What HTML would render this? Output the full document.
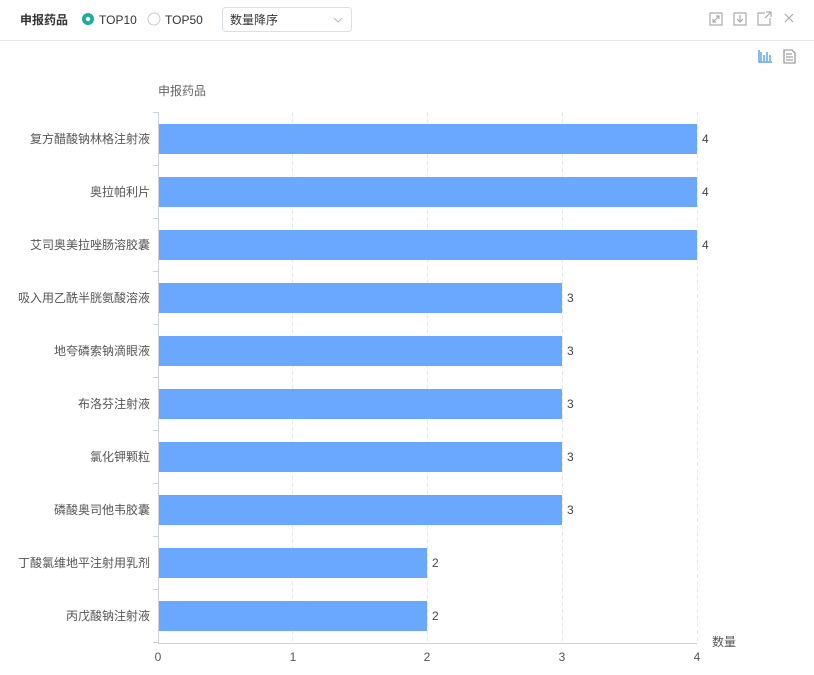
<html><head><style>body{margin:0;width:814px;height:675px;background:#fff;font-family:"Liberation Sans","Noto Sans CJK SC",sans-serif;overflow:hidden}</style></head><body>
<svg width="814" height="675" xmlns="http://www.w3.org/2000/svg" font-family="Liberation Sans, Noto Sans CJK SC, sans-serif">
<text x="20" y="24" font-size="12" font-weight="bold" fill="#333">申报药品</text>
<circle cx="88" cy="19" r="6" fill="#1aad9a"/><circle cx="88" cy="19" r="2.2" fill="#fff"/>
<text x="99" y="24" font-size="12" fill="#333">TOP10</text>
<circle cx="154" cy="19" r="6" fill="#fff" stroke="#ccc"/>
<text x="165" y="24" font-size="12" fill="#333">TOP50</text>
<rect x="222.5" y="7.5" width="129" height="24" rx="3" fill="#fff" stroke="#dcdfe6"/>
<text x="230" y="24" font-size="12" fill="#333">数量降序</text>
<path d="M334 18l4 4 4-4" fill="none" stroke="#bbb"/>
<line x1="0" y1="40.5" x2="814" y2="40.5" stroke="#e8e8e8"/>
<g fill="none" stroke="#aaa" stroke-width="1.2">
<rect x="710" y="13" width="12" height="12"/><path d="M713 22l6-6M713 19v3h3M719 19v-3h-3"/>
<rect x="734" y="13" width="12" height="12"/><path d="M740 15v7M737 19l3 3 3-3"/>
<path d="M765 13h-7v12h12v-7M766 12h5v5M771 12l-6 6"/>
<path d="M785 14l8 8M793 14l-8 8"/>
</g>
<g fill="none" stroke="#3a8ee6" stroke-width="1.2"><path d="M759 50v12h13M761 52v9M764 55v6M767 52v9M770 55v6"/></g>
<g fill="none" stroke="#888" stroke-width="1.1"><path d="M784 50h8l3 3v10h-11zM786 54h6M786 57h7M786 60h7"/></g>
<text x="158" y="95" font-size="12" fill="#666">申报药品</text>
<g stroke="#e6e8f0" stroke-dasharray="4,3"><line x1="292.5" y1="112" x2="292.5" y2="643"/><line x1="427.5" y1="112" x2="427.5" y2="643"/><line x1="562.5" y1="112" x2="562.5" y2="643"/><line x1="697.5" y1="112" x2="697.5" y2="643"/></g>
<g fill="#6aa7ff">
<rect x="158" y="124" width="539" height="30"/><rect x="158" y="177" width="539" height="30"/><rect x="158" y="230" width="539" height="30"/>
<rect x="158" y="283" width="404" height="30"/><rect x="158" y="336" width="404" height="30"/><rect x="158" y="389" width="404" height="30"/><rect x="158" y="442" width="404" height="30"/><rect x="158" y="495" width="404" height="30"/>
<rect x="158" y="548" width="269" height="30"/><rect x="158" y="601" width="269" height="30"/>
</g>
<g stroke="#ccd3d8"><line x1="158.5" y1="112" x2="158.5" y2="643"/><line x1="158" y1="643.5" x2="697" y2="643.5"/>
<path d="M153 112.5h5M153 165.5h5M153 218.5h5M153 271.5h5M153 324.5h5M153 377.5h5M153 430.5h5M153 483.5h5M153 536.5h5M153 589.5h5M153 642.5h5"/></g>
<g font-size="12" fill="#555" text-anchor="end">
<text x="150" y="143">复方醋酸钠林格注射液</text><text x="150" y="196">奥拉帕利片</text><text x="150" y="249">艾司奥美拉唑肠溶胶囊</text><text x="150" y="302">吸入用乙酰半胱氨酸溶液</text><text x="150" y="355">地夸磷索钠滴眼液</text><text x="150" y="408">布洛芬注射液</text><text x="150" y="461">氯化钾颗粒</text><text x="150" y="514">磷酸奥司他韦胶囊</text><text x="150" y="567">丁酸氯维地平注射用乳剂</text><text x="150" y="620">丙戊酸钠注射液</text>
</g>
<g font-size="12" fill="#444">
<text x="702" y="143">4</text><text x="702" y="196">4</text><text x="702" y="249">4</text><text x="567" y="302">3</text><text x="567" y="355">3</text><text x="567" y="408">3</text><text x="567" y="461">3</text><text x="567" y="514">3</text><text x="432" y="567">2</text><text x="432" y="620">2</text>
</g>
<g font-size="12" fill="#555" text-anchor="middle"><text x="158" y="661">0</text><text x="293" y="661">1</text><text x="427" y="661">2</text><text x="562" y="661">3</text><text x="697" y="661">4</text></g>
<text x="712" y="646" font-size="12" fill="#555">数量</text>
</svg>
</body></html>
